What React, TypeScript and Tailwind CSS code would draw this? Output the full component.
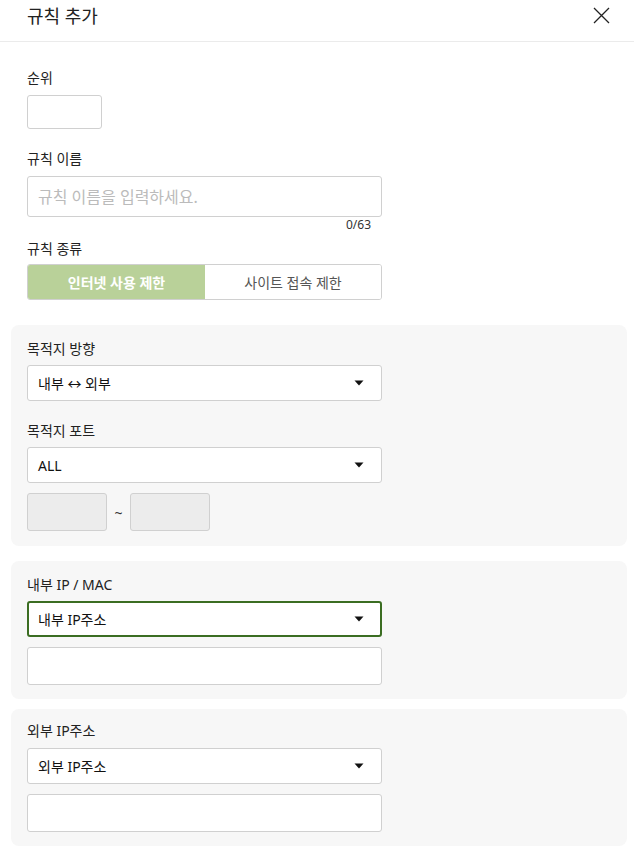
import React from "react";

const font = { fontFamily: '"Noto Sans", "Noto Sans CJK KR", sans-serif' };

function Caret() {
  return (
    <svg width="10" height="6" viewBox="0 0 10 6" className="shrink-0">
      <path d="M0.5 0.5 L9.5 0.5 L5 5.5 Z" fill="#111" />
    </svg>
  );
}

function Select({ value, active }: { value: string; active?: boolean }) {
  return (
    <div
      className={
        "flex h-[36px] w-[355px] items-center justify-between rounded-[3px] bg-white text-[14px] text-[#111] " +
        (active ? "border-2 border-[#3b6d22] pl-[9px] pr-[16px]" : "border border-[#d0d0d0] pl-[10px] pr-[17px]")
      }
    >
      <span>{value}</span>
      <Caret />
    </div>
  );
}

function Label({ children }: { children: React.ReactNode }) {
  return <div className="h-[20px] text-[14px] leading-[20px] text-[#222]">{children}</div>;
}

export default function App() {
  return (
    <div className="relative w-[634px] bg-white" style={font}>
      <div className="flex h-[42px] items-center justify-between border-b border-[#ebebeb] pl-[27px] pr-[24px]">
        <div className="pb-[10px] text-[18px] leading-[24px] text-[#222]">규칙 추가</div>
        <svg width="17" height="17" viewBox="0 0 17 17" className="mb-[10px]">
          <path d="M1 1 L16 16 M16 1 L1 16" stroke="#222" strokeWidth="1.3" />
        </svg>
      </div>

      <div className="px-[27px]">
        <div className="mt-[26px]">
          <Label>순위</Label>
          <div className="mt-[7px] h-[34px] w-[75px] rounded-[3px] border border-[#d0d0d0] bg-white" />
        </div>
        <div className="mt-[20px]">
          <Label>규칙 이름</Label>
          <div className="mt-[7px] flex h-[41px] w-[355px] items-center rounded-[3px] border border-[#d0d0d0] bg-white pl-[10px] text-[16px] text-[#bbbbbb]">
            규칙 이름을 입력하세요.
          </div>
          <div className="w-[344px] text-right text-[12px] leading-[16px] text-[#333]">0/63</div>
        </div>
        <div className="mt-[6px]">
          <Label>규칙 종류</Label>
          <div className="mt-[5px] flex h-[36px] w-[355px] overflow-hidden rounded-[3px] border border-[#d0d0d0]">
            <div className="flex w-[177px] items-center justify-center bg-[#b9d199] text-[14px] font-semibold text-white">
              인터넷 사용 제한
            </div>
            <div className="flex flex-1 items-center justify-center bg-white text-[14px] text-[#555]">
              사이트 접속 제한
            </div>
          </div>
        </div>
      </div>

      <div className="ml-[11px] mr-[7px] mt-[25px] rounded-[8px] bg-[#f7f7f7] px-[16px] pb-[15px] pt-[14px]">
        <Label>목적지 방향</Label>
        <div className="mt-[6px]">
          <Select value="내부 ↔ 외부" />
        </div>
        <div className="mt-[20px]">
          <Label>목적지 포트</Label>
        </div>
        <div className="mt-[6px]">
          <Select value="ALL" />
        </div>
        <div className="mt-[10px] flex items-center">
          <div className="h-[38px] w-[80px] rounded-[3px] border border-[#d0d0d0] bg-[#ececec]" />
          <span className="mx-[6px] w-[11px] text-center text-[14px] text-[#333]">~</span>
          <div className="h-[38px] w-[80px] rounded-[3px] border border-[#d0d0d0] bg-[#ececec]" />
        </div>
      </div>

      <div className="ml-[11px] mr-[7px] mt-[15px] rounded-[8px] bg-[#f7f7f7] px-[16px] pb-[14px] pt-[14px]">
        <Label>내부 IP / MAC</Label>
        <div className="mt-[6px]">
          <Select value="내부 IP주소" active />
        </div>
        <div className="mt-[10px] h-[38px] w-[355px] rounded-[3px] border border-[#d0d0d0] bg-white" />
      </div>

      <div className="ml-[11px] mr-[7px] mt-[10px] rounded-[8px] bg-[#f7f7f7] px-[16px] pb-[14px] pt-[12px]">
        <Label>외부 IP주소</Label>
        <div className="mt-[7px]">
          <Select value="외부 IP주소" />
        </div>
        <div className="mt-[10px] h-[38px] w-[355px] rounded-[3px] border border-[#d0d0d0] bg-white" />
      </div>
      <div className="h-[18px]" />
    </div>
  );
}
